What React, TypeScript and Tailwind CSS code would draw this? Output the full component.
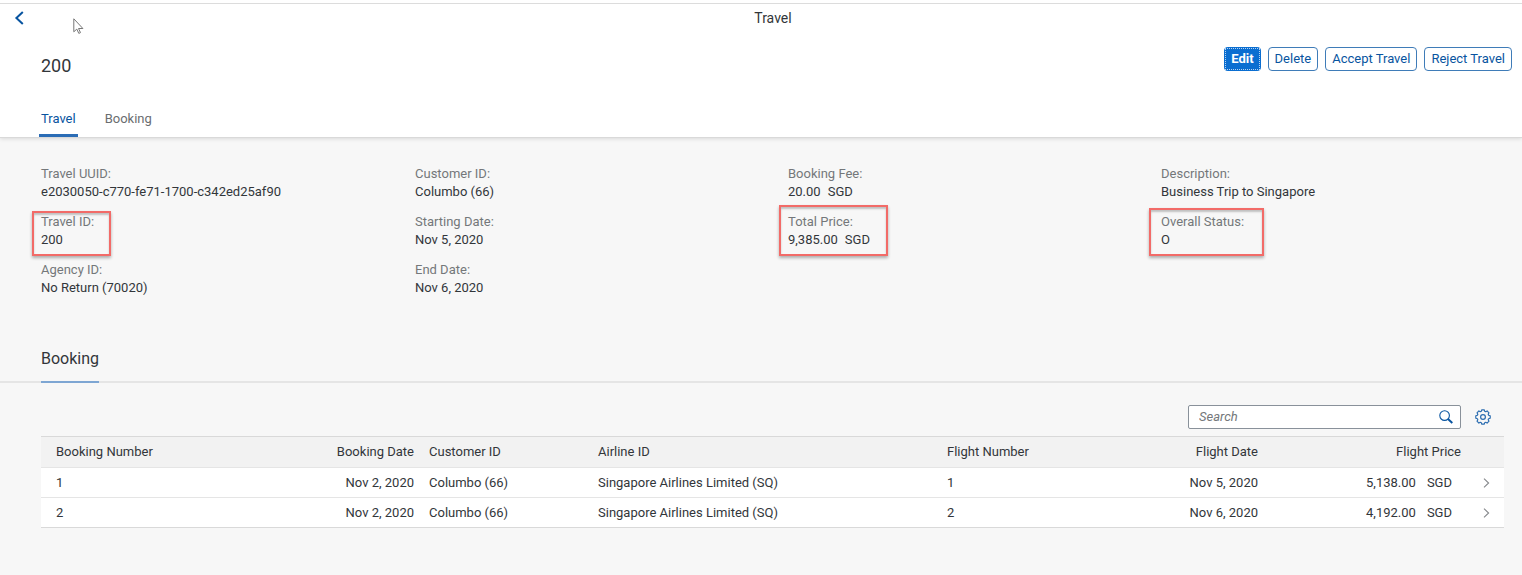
import type { ReactNode } from 'react';

type FieldProps = { label: string; children: ReactNode; mark?: string };

function Field({ label, children, mark }: FieldProps) {
  return (
    <div className="relative">
      {mark && (
        <span
          className={`pointer-events-none absolute border-2 border-[#f26b68] shadow-[0_2px_3px_rgba(0,0,0,0.3),inset_0_2px_2px_rgba(0,0,0,0.22)] ${mark}`}
        />
      )}
      <dt className="text-[#74777a]">{label}:</dt>
      <dd>{children}</dd>
    </div>
  );
}

function Amount({ value }: { value: string }) {
  return (
    <span className="flex gap-[7px]">
      <span>{value}</span>
      <span>SGD</span>
    </span>
  );
}

function BackIcon() {
  return (
    <svg width="10" height="14" viewBox="0 0 10 14" fill="none" stroke="#0854a0" strokeWidth="2">
      <path d="M8.8 1 2.4 7l6.4 6" />
    </svg>
  );
}

function SearchIcon() {
  return (
    <svg width="14" height="14" viewBox="0 0 14 14" fill="none" stroke="#0854a0">
      <circle cx="5.6" cy="5.6" r="4.8" strokeWidth="1.1" />
      <path d="m9 9 4.3 4" strokeWidth="1.9" />
    </svg>
  );
}

function GearIcon() {
  return (
    <svg width="16" height="16" viewBox="0 0 16 16" fill="none" stroke="#2a6cb0" strokeWidth="1.2" strokeLinejoin="round">
      <circle cx="8" cy="8" r="2.4" />
      <path d="M6.7 .8h2.6l.4 1.5 1 .4 1.4-.8 1.9 1.9-.8 1.4.4 1 1.6.5v2.6l-1.6.5-.4 1 .8 1.4-1.9 1.9-1.4-.8-1 .4-.4 1.5H6.7l-.4-1.5-1-.4-1.4.8L2 12.2l.8-1.4-.4-1L.8 9.3V6.7l1.6-.5.4-1L2 3.8l1.9-1.9 1.4.8 1-.4z" />
    </svg>
  );
}

function Cursor() {
  return (
    <svg className="absolute left-[73px] top-[18px]" width="12" height="17" viewBox="0 0 12 17" fill="#fff" stroke="#777" strokeWidth="1">
      <path d="M.8.8v13l3-2.7 2 4.3 1.7-.8-2-4.1h4.4z" />
    </svg>
  );
}

const bookings = [
  { no: '1', booked: 'Nov 2, 2020', flight: 'Nov 5, 2020', price: '5,138.00' },
  { no: '2', booked: 'Nov 2, 2020', flight: 'Nov 6, 2020', price: '4,192.00' },
];

const actions = ['Delete', 'Accept Travel', 'Reject Travel'];

export default function App() {
  return (
    <div className="min-h-screen bg-[#f7f7f7] font-[Roboto,sans-serif] text-[13px] leading-[18px] text-[#32363a]">
      <header className="relative border-b border-[#d9d9d9] bg-white pt-[3px] shadow-[0_1px_4px_rgba(0,0,0,0.12)]">
        <div className="grid h-[29px] grid-cols-[1fr_auto_1fr] items-center border-t border-[#dcdcdc] pl-[24px]">
          <button type="button" aria-label="Back" className="-ml-[10px] justify-self-start">
            <BackIcon />
          </button>
          <h1 className="text-[14px]">Travel</h1>
        </div>
        <div className="flex items-start justify-between pl-[41px] pr-[10px] pt-[14px]">
          <h2 className="pt-[8px] text-[18px] leading-[24px]">200</h2>
          <div className="flex gap-[7px] pt-px">
            <button type="button" className="h-6 rounded-[4px] bg-[#0a6ed1] p-px font-bold text-white">
              <span className="flex h-full items-center border border-dotted border-white/70 px-[5px]">Edit</span>
            </button>
            {actions.map((a) => (
              <button key={a} type="button" className="h-6 rounded-[4px] border border-[#3f7cb8] bg-white px-[6px] text-[#0854a0]">
                {a}
              </button>
            ))}
          </div>
        </div>
        <nav className="flex gap-[25px] pl-[39px] pt-[32px]">
          <a href="#travel" className="rounded-t-[1px] border-b-[3px] border-[#2b6cb5] px-[2px] pb-[6px] text-[#0854a0]">Travel</a>
          <a href="#booking" className="px-[2px] pb-[6px] text-[#6a6d70]">Booking</a>
        </nav>
        <Cursor />
      </header>

      <main>
        <dl id="travel" className="grid grid-cols-[374fr_373fr_373fr_361fr] pl-[41px] pt-[27px]">
          <div className="flex flex-col gap-[12px]">
            <Field label="Travel UUID">e2030050-c770-fe71-1700-c342ed25af90</Field>
            <Field label="Travel ID" mark="-left-[9px] -top-[2px] h-[45px] w-[79px]">200</Field>
            <Field label="Agency ID">No Return (70020)</Field>
          </div>
          <div className="flex flex-col gap-[12px]">
            <Field label="Customer ID">Columbo (66)</Field>
            <Field label="Starting Date">Nov 5, 2020</Field>
            <Field label="End Date">Nov 6, 2020</Field>
          </div>
          <div className="flex flex-col gap-[12px]">
            <Field label="Booking Fee"><Amount value="20.00" /></Field>
            <Field label="Total Price" mark="-left-[9px] -top-[8px] h-[51px] w-[109px]"><Amount value="9,385.00" /></Field>
          </div>
          <div className="flex flex-col gap-[12px]">
            <Field label="Description">Business Trip to Singapore</Field>
            <Field label="Overall Status" mark="-left-[12px] -top-[5px] h-[48px] w-[115px]">O</Field>
          </div>
        </dl>

        <section id="booking">
          <div className="mt-[50px] flex border-b-2 border-[#e5e5e5] pl-[41px]">
            <h2 className="-mb-[2px] border-b-2 border-[#7ea6d3] pb-[10px] text-[16px] leading-[24px]">Booking</h2>
          </div>
          <div className="flex items-center justify-end gap-[14px] pr-[31px] pt-[22px]">
            <div className="flex h-6 w-[273px] items-center rounded-[2px] border border-[#89919a] bg-white pl-[10px] pr-[7px]">
              <input
                type="search"
                aria-label="Search"
                placeholder="Search"
                className="min-w-0 flex-1 bg-transparent outline-none placeholder:italic placeholder:text-[#74777a]"
              />
              <button type="button" aria-label="Run search"><SearchIcon /></button>
            </div>
            <button type="button" aria-label="Settings"><GearIcon /></button>
          </div>
          <div className="pb-12 pl-[41px] pr-[18px] pt-[7px]">
            <table className="w-full table-fixed border-collapse text-left">
              <colgroup>
                <col className="w-[190px]" />
                <col className="w-[191px]" />
                <col className="w-[169px]" />
                <col />
                <col className="w-[180px]" />
                <col className="w-[146px]" />
                <col className="w-[203px]" />
                <col className="w-[35px]" />
              </colgroup>
              <thead>
                <tr className="h-[31px] border-b border-t border-b-[#e5e5e5] border-t-[#d9d9d9] bg-[#f2f2f2] [&>th]:font-normal">
                  <th className="pl-[15px]">Booking Number</th>
                  <th className="pr-[8px] text-right">Booking Date</th>
                  <th className="pl-[7px]">Customer ID</th>
                  <th className="pl-[7px]">Airline ID</th>
                  <th className="pl-[7px]">Flight Number</th>
                  <th className="pr-[8px] text-right">Flight Date</th>
                  <th className="pr-[8px] text-right">Flight Price</th>
                  <th aria-label="Open" />
                </tr>
              </thead>
              <tbody>
                {bookings.map((b) => (
                  <tr key={b.no} className="h-[30px] border-b border-[#e5e5e5] bg-white last:border-[#d9d9d9]">
                    <td className="pl-[15px]">{b.no}</td>
                    <td className="pr-[8px] text-right">{b.booked}</td>
                    <td className="pl-[7px]">Columbo (66)</td>
                    <td className="pl-[7px]">Singapore Airlines Limited (SQ)</td>
                    <td className="pl-[7px]">{b.no}</td>
                    <td className="pr-[8px] text-right">{b.flight}</td>
                    <td className="pr-[17px]">
                      <span className="flex justify-end gap-[11px]">
                        <span>{b.price}</span>
                        <span>SGD</span>
                      </span>
                    </td>
                    <td>
                      <svg className="ml-[14px]" width="7" height="10" viewBox="0 0 7 10" fill="none" stroke="#85888b" strokeWidth="1.1">
                        <path d="m1 .7 4.6 4.3L1 9.3" />
                      </svg>
                    </td>
                  </tr>
                ))}
              </tbody>
            </table>
          </div>
        </section>
      </main>
    </div>
  );
}
